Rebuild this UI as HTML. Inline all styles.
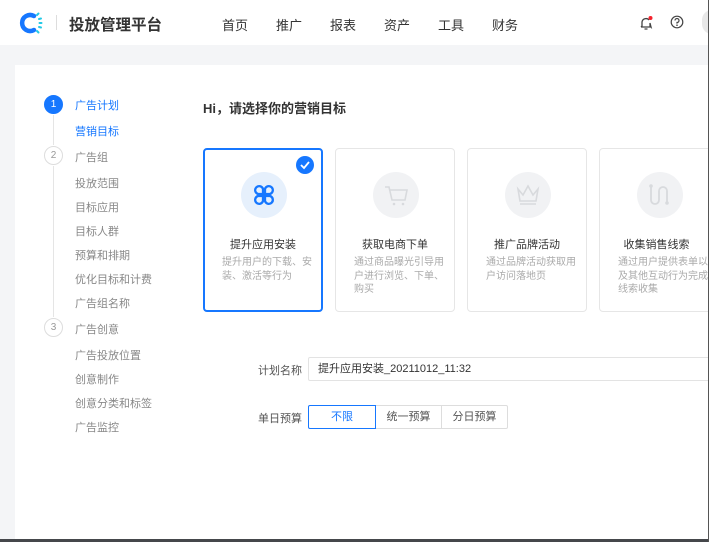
<!DOCTYPE html>
<html><head><meta charset="utf-8"><style>
*{margin:0;padding:0;box-sizing:border-box}
body{width:709px;height:542px;overflow:hidden;background:#f4f5f7;font-family:"Liberation Sans","Noto Sans CJK SC",sans-serif;position:relative;color:#333}
.hd{position:absolute;left:0;top:0;width:709px;height:45px;background:#fff}
.title{position:absolute;left:69px;top:13px;font-size:15.5px;font-weight:bold;color:#333}
.sep{position:absolute;left:56px;top:15px;width:1px;height:15px;background:#ddd}
.nav{position:absolute;top:15px;font-size:13px;color:#333}
.panel{position:absolute;left:15px;top:65px;width:694px;height:474px;background:#fff}
.botbar{position:absolute;left:0;top:539px;width:709px;height:3px;background:#45474b}
.rbar{position:absolute;left:708px;top:0;width:1px;height:542px;background:#555}
.step{position:absolute;left:44px;width:19px;height:19px;border-radius:50%;font-size:10px;text-align:center;line-height:17px;border:1px solid #ddd;color:#999;background:#fff}
.si{position:absolute;left:75px;font-size:11px;color:#888}
.vl{position:absolute;left:53px;width:1px;background:#e5e5e5}
.card{position:absolute;top:148px;width:120px;height:164px;border:1px solid #e6e6e6;border-radius:4px;background:#fff}
.card .ic{position:absolute;left:37px;top:23px;width:46px;height:46px;border-radius:50%;background:#f1f2f4}
.card .t{position:absolute;top:87px;left:0;width:100%;text-align:center;font-size:11px;color:#333}
.card .d{position:absolute;top:107px;left:18px;width:92px;font-size:10px;line-height:13.5px;color:#aaa}
.lab{position:absolute;left:258px;font-size:11px;color:#555}
.seg{position:absolute;top:405px;height:24px;border:1px solid #ddd;font-size:11px;color:#555;text-align:center;line-height:22px}
</style></head><body>
<div class="hd">
<svg style="position:absolute;left:19px;top:11px" width="26" height="24" viewBox="0 0 26 24"><path d="M15 5 A8 8 0 1 0 15 19" fill="none" stroke="#1677ff" stroke-width="4.5" stroke-linecap="round"/><g stroke="#22c9e6" stroke-width="2" stroke-linecap="round"><line x1="18" y1="4" x2="19.5" y2="2.5"/><line x1="20" y1="8" x2="22" y2="7.5"/><line x1="20.5" y1="12" x2="22.5" y2="12"/><line x1="20" y1="16" x2="22" y2="16.5"/><line x1="18" y1="20" x2="19.5" y2="21.5"/></g></svg>
<div class="sep"></div>
<div class="title">投放管理平台</div>
<div class="nav" style="left:222px">首页</div><div class="nav" style="left:276px">推广</div><div class="nav" style="left:330px">报表</div><div class="nav" style="left:384px">资产</div><div class="nav" style="left:438px">工具</div><div class="nav" style="left:492px">财务</div>
<svg style="position:absolute;left:638px;top:15px" width="16" height="16" viewBox="0 0 16 16"><path d="M3 12 L4 11 V7 A4 4 0 0 1 11 5 M12 8 V11 L13 12 Z M3 12 H13 M6.5 14 H9.5" fill="none" stroke="#444" stroke-width="1.3"/><circle cx="12.5" cy="3" r="2" fill="#f5222d"/></svg>
<svg style="position:absolute;left:670px;top:15px" width="14" height="14" viewBox="0 0 14 14"><circle cx="7" cy="7" r="5.8" fill="none" stroke="#444" stroke-width="1.2"/><path d="M5 5.5 A2 2 0 1 1 7 7.5 V8.6" fill="none" stroke="#444" stroke-width="1.2"/><circle cx="7" cy="10.2" r=".8" fill="#444"/></svg>
<div style="position:absolute;left:702px;top:10px;width:20px;height:24px;border-radius:10px;background:#e8e8e8"></div>
</div>
<div class="panel"></div>
<div class="step" style="top:95px;background:#1677ff;border-color:#1677ff;color:#fff">1</div>
<div class="vl" style="top:115px;height:30px"></div>
<div class="step" style="top:146px">2</div>
<div class="vl" style="top:166px;height:151px"></div>
<div class="step" style="top:318px">3</div>
<div class="si" style="top:97px;color:#1677ff">广告计划</div>
<div class="si" style="top:123px;color:#1677ff">营销目标</div>
<div class="si" style="top:149px">广告组</div>
<div class="si" style="top:175px">投放范围</div>
<div class="si" style="top:199px">目标应用</div>
<div class="si" style="top:223px">目标人群</div>
<div class="si" style="top:247px">预算和排期</div>
<div class="si" style="top:271px">优化目标和计费</div>
<div class="si" style="top:295px">广告组名称</div>
<div class="si" style="top:321px">广告创意</div>
<div class="si" style="top:347px">广告投放位置</div>
<div class="si" style="top:371px">创意制作</div>
<div class="si" style="top:395px">创意分类和标签</div>
<div class="si" style="top:419px">广告监控</div>
<div style="position:absolute;left:203px;top:98px;font-size:13px;font-weight:bold;color:#333">Hi，请选择你的营销目标</div>
<div class="card" style="left:203px;border:2px solid #1677ff">
<div class="ic" style="background:#e6f0fc;left:36px;top:22px"><svg width="46" height="46" viewBox="0 0 46 46"><g fill="none" stroke="#1677ff" stroke-width="2.3"><path d="M22 22 H17 A4 4 0 1 1 22 17 Z"/><path d="M24 22 H29 A4 4 0 1 0 24 17 Z"/><path d="M22 24 H17 A4 4 0 1 0 22 29 Z"/><path d="M24 24 H29 A4 4 0 1 1 24 29 Z"/></g></svg></div>
<div style="position:absolute;right:7px;top:6px;width:18px;height:18px;border-radius:50%;background:#1677ff"><svg width="18" height="18"><path d="M5 9 L8 12 L13 6" fill="none" stroke="#fff" stroke-width="1.8"/></svg></div>
<div class="t" style="top:86px">提升应用安装</div>
<div class="d" style="top:106px;left:17px">提升用户的下载、安装、激活等行为</div></div>
<div class="card" style="left:335px"><div class="ic"><svg width="46" height="46"><path d="M12 15 H16 L19 28 H32 L34 18 H17" fill="none" stroke="#d8dadd" stroke-width="1.6"/><circle cx="21" cy="32" r="1.3" fill="#d8dadd"/><circle cx="30" cy="32" r="1.3" fill="#d8dadd"/></svg></div><div class="t">获取电商下单</div><div class="d">通过商品曝光引导用户进行浏览、下单、购买</div></div>
<div class="card" style="left:467px"><div class="ic"><svg width="46" height="46"><path d="M13 17 L18 23 L23 14 L28 23 L33 17 L31 29 H15 Z M15 32 H31" fill="none" stroke="#d8dadd" stroke-width="1.6"/></svg></div><div class="t">推广品牌活动</div><div class="d">通过品牌活动获取用户访问落地页</div></div>
<div class="card" style="left:599px;width:115px"><div class="ic"><svg width="46" height="46"><path d="M14 15 V28 A4 4 0 0 0 22 28 V19 A4 4 0 0 1 30 19 V30" fill="none" stroke="#d8dadd" stroke-width="1.8"/><circle cx="14" cy="14" r="1.8" fill="#d8dadd"/><circle cx="30" cy="31" r="1.8" fill="#d8dadd"/></svg></div><div class="t">收集销售线索</div><div class="d">通过用户提供表单以及其他互动行为完成线索收集</div></div>
<div class="lab" style="top:362px">计划名称</div>
<div style="position:absolute;left:308px;top:357px;width:410px;height:24px;border:1px solid #e3e3e3;border-radius:2px;font-size:11px;color:#333;padding-left:9px;line-height:22px">提升应用安装_20211012_11:32</div>
<div class="lab" style="top:410px">单日预算</div>
<div class="seg" style="left:308px;width:68px;border-color:#1677ff;color:#1677ff;border-radius:2px 0 0 2px;z-index:2">不限</div>
<div class="seg" style="left:375px;width:67px">统一预算</div>
<div class="seg" style="left:441px;width:67px;border-radius:0 2px 2px 0">分日预算</div>
<div class="botbar"></div><div class="rbar"></div>
</body></html>
